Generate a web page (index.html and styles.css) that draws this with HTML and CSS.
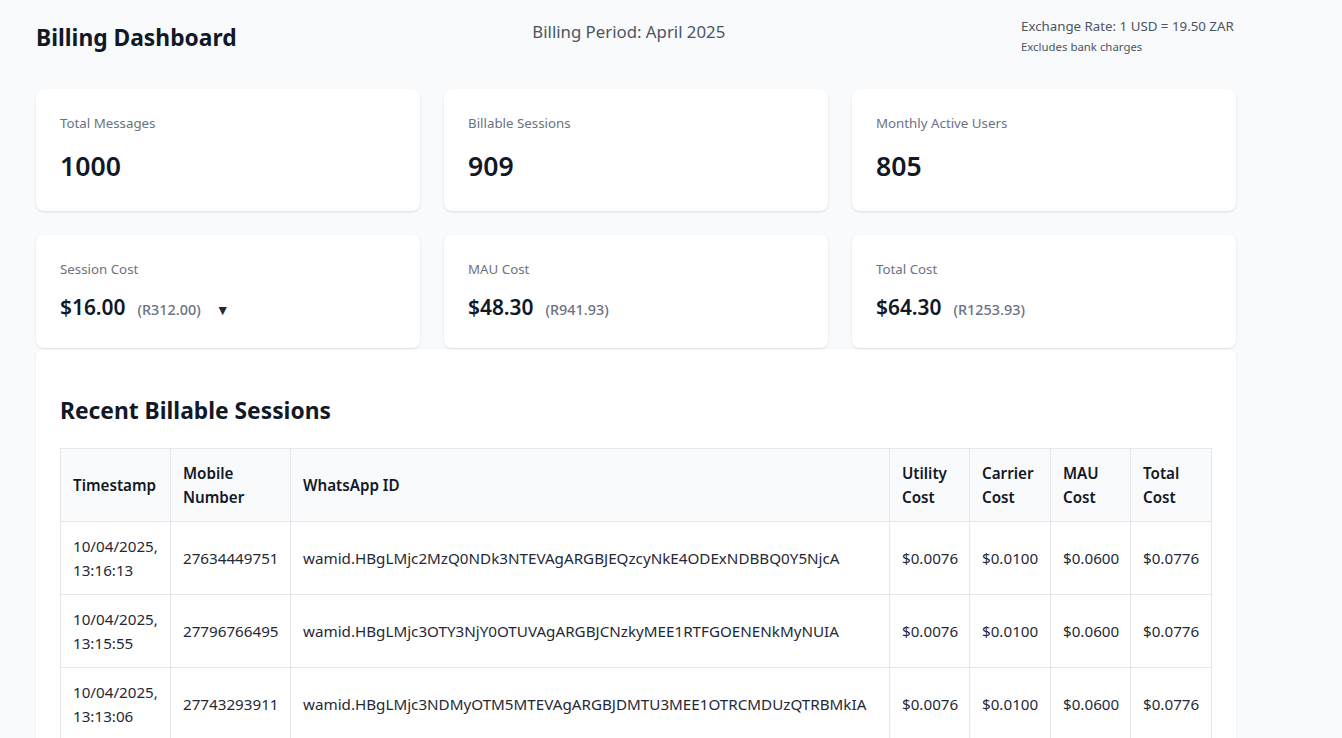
FILE: index.html
```html
<!DOCTYPE html>
<html lang="en">
<head>
<meta charset="utf-8">
<title>Billing Dashboard</title>
<link rel="stylesheet" href="styles.css">
</head>
<body>
<div class="page">
  <header class="header">
    <h1 class="title">Billing Dashboard</h1>
    <div class="period">Billing Period: April 2025</div>
    <div class="rate">
      <div class="rate-main">Exchange Rate: 1 USD = 19.50 ZAR</div>
      <div class="rate-note">Excludes bank charges</div>
    </div>
  </header>

  <section class="grid">
    <div class="card">
      <div class="label">Total Messages</div>
      <div class="value">1000</div>
    </div>
    <div class="card">
      <div class="label">Billable Sessions</div>
      <div class="value">909</div>
    </div>
    <div class="card">
      <div class="label">Monthly Active Users</div>
      <div class="value">805</div>
    </div>
    <div class="card">
      <div class="label">Session Cost</div>
      <div class="money"><span class="usd">$16.00</span><span class="zar">(R312.00)</span><span class="caret">▼</span></div>
    </div>
    <div class="card">
      <div class="label">MAU Cost</div>
      <div class="money"><span class="usd">$48.30</span><span class="zar">(R941.93)</span></div>
    </div>
    <div class="card">
      <div class="label">Total Cost</div>
      <div class="money"><span class="usd">$64.30</span><span class="zar">(R1253.93)</span></div>
    </div>
  </section>

  <section class="sessions">
    <h2 class="sessions-title">Recent Billable Sessions</h2>
    <table class="table">
      <colgroup>
        <col class="c-ts"><col class="c-mob"><col class="c-id"><col class="c-sm"><col class="c-md"><col class="c-sm"><col class="c-md">
      </colgroup>
      <thead>
        <tr>
          <th>Timestamp</th>
          <th>Mobile Number</th>
          <th>WhatsApp ID</th>
          <th>Utility Cost</th>
          <th>Carrier Cost</th>
          <th>MAU Cost</th>
          <th>Total Cost</th>
        </tr>
      </thead>
      <tbody>
        <tr>
          <td>10/04/2025, 13:16:13</td>
          <td>27634449751</td>
          <td>wamid.HBgLMjc2MzQ0NDk3NTEVAgARGBJEQzcyNkE4ODExNDBBQ0Y5NjcA</td>
          <td>$0.0076</td>
          <td>$0.0100</td>
          <td>$0.0600</td>
          <td>$0.0776</td>
        </tr>
        <tr>
          <td>10/04/2025, 13:15:55</td>
          <td>27796766495</td>
          <td>wamid.HBgLMjc3OTY3NjY0OTUVAgARGBJCNzkyMEE1RTFGOENENkMyNUIA</td>
          <td>$0.0076</td>
          <td>$0.0100</td>
          <td>$0.0600</td>
          <td>$0.0776</td>
        </tr>
        <tr>
          <td>10/04/2025, 13:13:06</td>
          <td>27743293911</td>
          <td>wamid.HBgLMjc3NDMyOTM5MTEVAgARGBJDMTU3MEE1OTRCMDUzQTRBMkIA</td>
          <td>$0.0076</td>
          <td>$0.0100</td>
          <td>$0.0600</td>
          <td>$0.0776</td>
        </tr>
      </tbody>
    </table>
  </section>
</div>
</body>
</html>
```

FILE: styles.css
```css
* { box-sizing: border-box; }

html, body {
  margin: 0;
  padding: 0;
  background: #f9fafb;
}

body {
  font-family: "Noto Sans", "Open Sans", sans-serif;
  color: #111827;
  overflow: hidden;
}

.page {
  width: 1200px;
  margin-left: 36px;
  padding-top: 16px;
}

.header {
  display: flex;
  justify-content: space-between;
  align-items: flex-start;
  height: 73px;
}

.title {
  margin: 6px 0 0;
  font-size: 22.8px;
  line-height: 32px;
  font-weight: 700;
  color: #111827;
}

.period {
  margin-top: 4px;
  font-size: 16.8px;
  line-height: 24px;
  color: #4b5563;
}

.rate {
  width: 215px;
  white-space: nowrap;
  color: #4b5563;
}

.rate-main {
  font-size: 13.3px;
  line-height: 20px;
}

.rate-note {
  margin-top: 2px;
  font-size: 11.4px;
  line-height: 18px;
}

.grid {
  display: grid;
  grid-template-columns: repeat(3, 1fr);
  column-gap: 24px;
  row-gap: 24px;
}

.card {
  background: #ffffff;
  border-radius: 8px;
  box-shadow: 0 1px 3px rgba(0, 0, 0, 0.08), 0 1px 2px rgba(0, 0, 0, 0.04);
  padding: 24px;
}

.label {
  font-size: 13.3px;
  line-height: 20px;
  color: #6b7280;
  margin-bottom: 12px;
}

.value {
  font-size: 26.6px;
  line-height: 42px;
  font-weight: 600;
  color: #111827;
}

.money {
  display: flex;
  align-items: baseline;
  height: 33px;
  line-height: 33px;
}

.usd {
  font-size: 20.9px;
  font-weight: 600;
  color: #111827;
}

.zar {
  margin-left: 12px;
  font-size: 14.4px;
  font-weight: 500;
  color: #6b7280;
}

.caret {
  margin-left: 15px;
  font-size: 14px;
  color: #1f2937;
}

.sessions {
  margin-top: 1px;
  background: #ffffff;
  border-radius: 8px 8px 0 0;
  box-shadow: 0 1px 3px rgba(0, 0, 0, 0.08);
  padding: 24px 24px 24px;
}

.sessions-title {
  margin: 22px 0 21px;
  font-size: 22.8px;
  line-height: 32px;
  font-weight: 700;
  color: #111827;
}

.table {
  width: 1152px;
  table-layout: fixed;
  border-collapse: collapse;
  font-size: 15.2px;
  line-height: 24px;
}

.c-ts { width: 110px; }
.c-mob { width: 120px; }
.c-id { width: 599px; }
.c-sm { width: 80px; }
.c-md { width: 81px; }

.table th,
.table td {
  border: 1px solid #e5e7eb;
  padding: 12px;
  text-align: left;
  vertical-align: middle;
}

.table th {
  background: #f9fafb;
  font-weight: 600;
  color: #111827;
}

.table td {
  color: #1f2937;
}
```
